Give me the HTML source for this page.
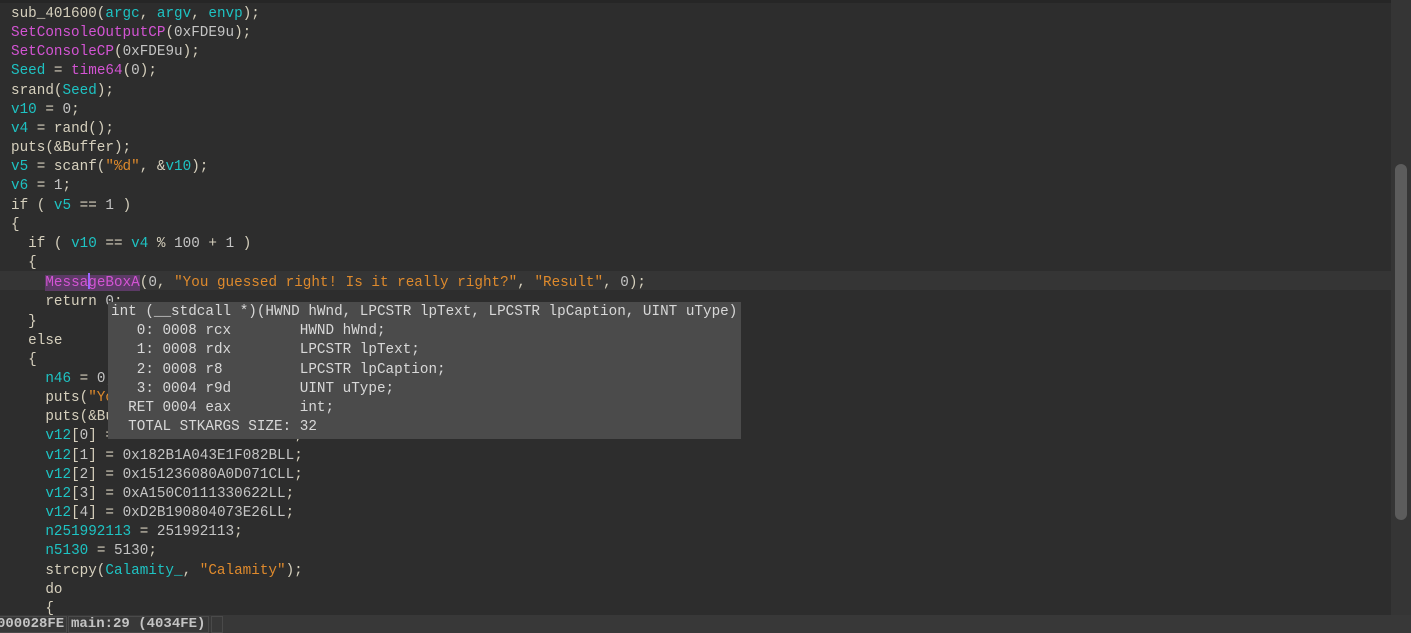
<!DOCTYPE html>
<html><head><meta charset="utf-8"><style>
html,body{margin:0;padding:0;width:1411px;height:633px;overflow:hidden;background:#2d2d2d;}
.ed{position:absolute;left:0;top:0;width:1391px;height:615px;background:#2d2d2d;overflow:hidden}
.topstrip{position:absolute;left:0;top:0;width:1411px;height:3px;background:#262626}
.code{position:absolute;left:11px;top:5px;font-family:"Liberation Mono",monospace;font-size:14.3px;line-height:19.15px;color:#d6d0bd;white-space:pre}
.hl{position:absolute;left:0;top:271px;width:1391px;height:19px;background:#353535}
.c{color:#1ec3c3}.m{color:#d354d3}.s{color:#df8a2c}.n{color:#c4c4c4}
.cur{display:inline-block;width:2px;height:16px;background:#9a66ff;vertical-align:-3px;margin-right:-2px}
.sel{background:#5c3a66}
.tip{position:absolute;left:108px;top:302px;width:633px;height:137px;background:#4b4b4b;font-family:"Liberation Mono",monospace;font-size:14.3px;line-height:19.2px;color:#d8d8d8;white-space:pre;padding:1px 0 0 3px;box-sizing:border-box}
.sb{position:absolute;left:1391px;top:0;width:20px;height:615px;background:#353535}
.thumb{position:absolute;left:1395px;top:164px;width:12px;height:356px;border-radius:6px;background:#5c5c5c}
.status{position:absolute;left:0;top:615px;width:1411px;height:18px;background:#383838}
.box{position:absolute;top:1px;height:17px;border:1px solid #4a4a4a;box-sizing:border-box;font-family:"Liberation Mono",monospace;font-weight:bold;font-size:14px;line-height:15px;color:#c4c4c4;white-space:pre;overflow:hidden}
</style></head><body>
<div class="ed">
<div class="hl"></div>
<div class="code">sub_401600(<span class="c">argc</span>, <span class="c">argv</span>, <span class="c">envp</span>);
<span class="m">SetConsoleOutputCP</span>(<span class="n">0xFDE9u</span>);
<span class="m">SetConsoleCP</span>(<span class="n">0xFDE9u</span>);
<span class="c">Seed</span> = <span class="m">time64</span>(<span class="n">0</span>);
srand(<span class="c">Seed</span>);
<span class="c">v10</span> = <span class="n">0</span>;
<span class="c">v4</span> = rand();
puts(&amp;Buffer);
<span class="c">v5</span> = scanf(<span class="s">"%d"</span>, &amp;<span class="c">v10</span>);
<span class="c">v6</span> = <span class="n">1</span>;
if ( <span class="c">v5</span> == <span class="n">1</span> )
{
  if ( <span class="c">v10</span> == <span class="c">v4</span> % <span class="n">100</span> + <span class="n">1</span> )
  {
    <span class="m sel">Messa<span class="cur"></span>geBoxA</span>(<span class="n">0</span>, <span class="s">"You guessed right! Is it really right?"</span>, <span class="s">"Result"</span>, <span class="n">0</span>);
    return <span class="n">0</span>;
  }
  else
  {
    <span class="c">n46</span> = <span class="n">0</span>;
    puts(<span class="s">"You</span>
    puts(&amp;Buffer);
    <span class="c">v12</span>[<span class="n">0</span>] = <span class="n">0x0000000000000000LL</span>;
    <span class="c">v12</span>[<span class="n">1</span>] = <span class="n">0x182B1A043E1F082BLL</span>;
    <span class="c">v12</span>[<span class="n">2</span>] = <span class="n">0x151236080A0D071CLL</span>;
    <span class="c">v12</span>[<span class="n">3</span>] = <span class="n">0xA150C0111330622LL</span>;
    <span class="c">v12</span>[<span class="n">4</span>] = <span class="n">0xD2B190804073E26LL</span>;
    <span class="c">n251992113</span> = <span class="n">251992113</span>;
    <span class="c">n5130</span> = <span class="n">5130</span>;
    strcpy(<span class="c">Calamity_</span>, <span class="s">"Calamity"</span>);
    do
    {</div>
<div class="tip">int (__stdcall *)(HWND hWnd, LPCSTR lpText, LPCSTR lpCaption, UINT uType)
   0: 0008 rcx        HWND hWnd;
   1: 0008 rdx        LPCSTR lpText;
   2: 0008 r8         LPCSTR lpCaption;
   3: 0004 r9d        UINT uType;
  RET 0004 eax        int;
  TOTAL STKARGS SIZE: 32</div>
</div>
<div class="topstrip"></div>
<div class="sb"></div><div class="thumb"></div>
<div class="status">
<div class="box" style="left:-4px;width:71px;padding-left:0">000028FE</div>
<div class="box" style="left:68px;width:141px;padding-left:2px">main:29 (4034FE)</div>
<div class="box" style="left:211px;width:12px"></div>
</div>
</body></html>
